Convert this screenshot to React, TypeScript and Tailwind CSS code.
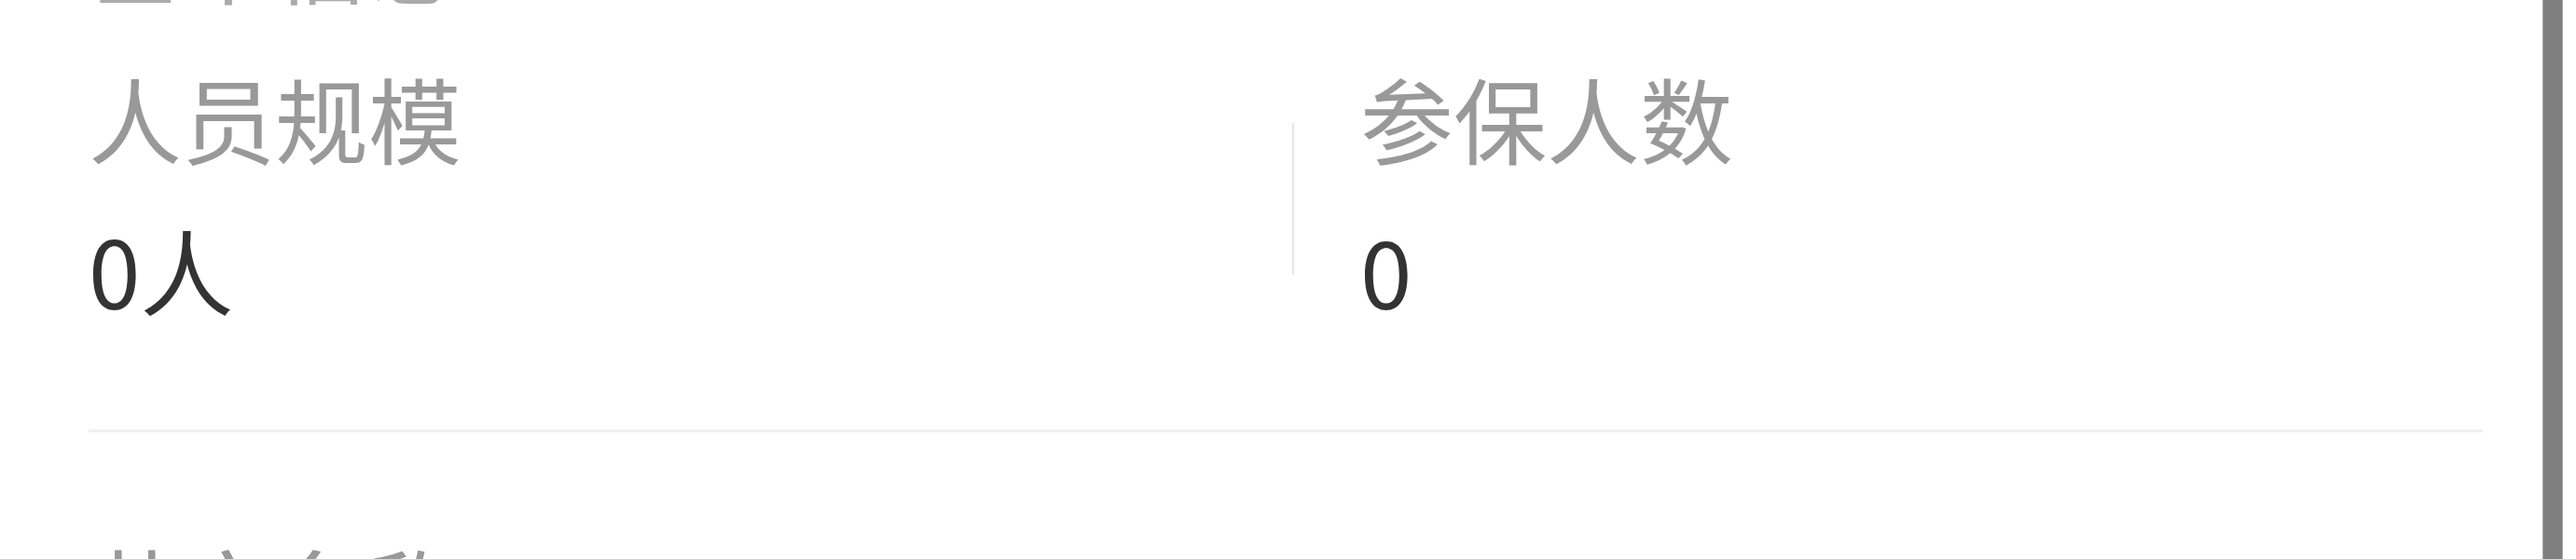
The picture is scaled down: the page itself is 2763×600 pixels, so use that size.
import React from "react";

const font = { fontFamily: '"Noto Sans CJK SC", "Noto Sans", sans-serif' };

function Txt({ children, className }: { children: React.ReactNode; className: string }) {
  return (
    <div className={"text-[100px] leading-none font-normal whitespace-nowrap h-[100px] " + className}>
      {children}
    </div>
  );
}

export default function App() {
  return (
    <div className="w-[2763px] h-[600px] overflow-hidden bg-white flex" style={font}>
      <div className="flex-1 flex flex-col pl-[95px] pr-[64px]">
        <div className="-mt-[96px]">
          <Txt className="text-[#aaaaaa]">基本信息</Txt>
        </div>

        <div className="mt-[72px] flex items-start">
          <div className="w-[1291px] shrink-0 flex flex-col gap-[63px]">
            <Txt className="text-[#999999]">人员规模</Txt>
            <Txt className="text-[#333333]">0人</Txt>
          </div>
          <div className="mt-[56px] w-[2px] h-[163px] bg-[#e6e6e6] shrink-0" />
          <div className="flex-1 flex flex-col gap-[63px] pl-[71px]">
            <Txt className="text-[#999999]">参保人数</Txt>
            <Txt className="text-[#333333]">0</Txt>
          </div>
        </div>

        <div className="mt-[122px] h-[3px] bg-[#efefef] shrink-0" />

        <div className="mt-[118px]">
          <Txt className="text-[#999999]">英文名称</Txt>
        </div>
      </div>

      <div className="w-[22px] h-full bg-[#7f7f7f] border-x border-[#a8a8a8] shrink-0" />
      <div className="w-[14px] shrink-0" />
    </div>
  );
}
